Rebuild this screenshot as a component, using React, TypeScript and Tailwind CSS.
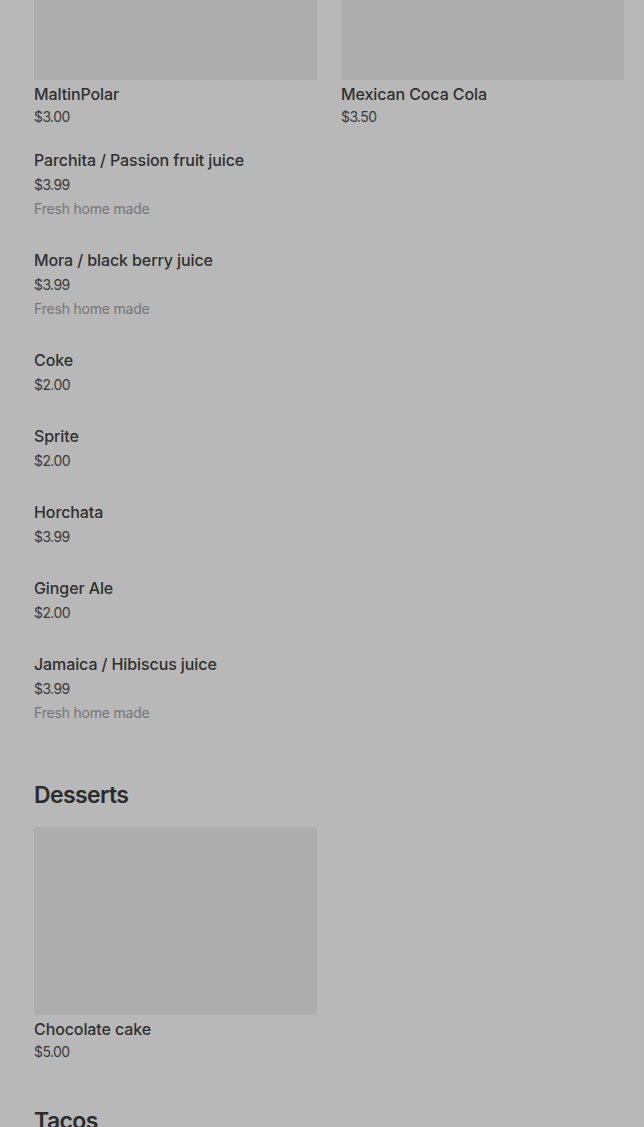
type Item = { name: string; price: string; desc?: string };

const drinksGrid: Item[] = [
  { name: "MaltinPolar", price: "$3.00" },
  { name: "Mexican Coca Cola", price: "$3.50" },
];

const drinksList: Item[] = [
  { name: "Parchita / Passion fruit juice", price: "$3.99", desc: "Fresh home made" },
  { name: "Mora / black berry juice", price: "$3.99", desc: "Fresh home made" },
  { name: "Coke", price: "$2.00" },
  { name: "Sprite", price: "$2.00" },
  { name: "Horchata", price: "$3.99" },
  { name: "Ginger Ale", price: "$2.00" },
  { name: "Jamaica / Hibiscus juice", price: "$3.99", desc: "Fresh home made" },
];

function GridCard({ item }: { item: Item }) {
  return (
    <div className="flex flex-col">
      <div className="h-[188px] bg-[#adadad]" />
      <div className="mt-1 text-[16px] leading-5 font-medium tracking-[-0.1px] text-[#2f2f2f]">{item.name}</div>
      <div className="mt-[3px] text-[14px] leading-5 tracking-[-0.6px] text-[#3a3a3a]">{item.price}</div>
    </div>
  );
}

function ListItem({ item }: { item: Item }) {
  return (
    <div className="flex flex-col pb-[31px]">
      <div className="text-[16px] leading-5 font-medium tracking-[-0.1px] text-[#2f2f2f]">{item.name}</div>
      <div className="mt-[5px] text-[14px] leading-5 tracking-[-0.6px] text-[#3a3a3a]">{item.price}</div>
      {item.desc && (
        <div className="mt-1 text-[14px] leading-5 tracking-[-0.2px] text-[#767676]">{item.desc}</div>
      )}
    </div>
  );
}

export default function App() {
  return (
    <div
      className="min-h-screen bg-[#b8b8b8] overflow-hidden"
      style={{ fontFamily: "Inter, 'Noto Sans', sans-serif" }}
    >
      <div className="-mt-[108px] pl-[34px] pr-[20px]">
        {/* Drinks, picture cards */}
        <div className="grid grid-cols-2 gap-x-6">
          {drinksGrid.map((it) => (
            <GridCard key={it.name} item={it} />
          ))}
        </div>

        {/* Drinks, plain rows */}
        <div className="mt-[23px] flex flex-col">
          {drinksList.map((it) => (
            <ListItem key={it.name} item={it} />
          ))}
        </div>

        {/* Desserts */}
        <h2 className="mt-[25px] text-[23px] leading-8 font-semibold tracking-[-0.6px] text-[#2b2b2b]">
          Desserts
        </h2>
        <div className="mt-4 grid grid-cols-2 gap-x-6">
          <GridCard item={{ name: "Chocolate cake", price: "$5.00" }} />
        </div>

        {/* Tacos */}
        <h2 className="mt-[43px] text-[23px] leading-8 font-semibold tracking-[-0.6px] text-[#2b2b2b]">
          Tacos
        </h2>
      </div>
    </div>
  );
}
